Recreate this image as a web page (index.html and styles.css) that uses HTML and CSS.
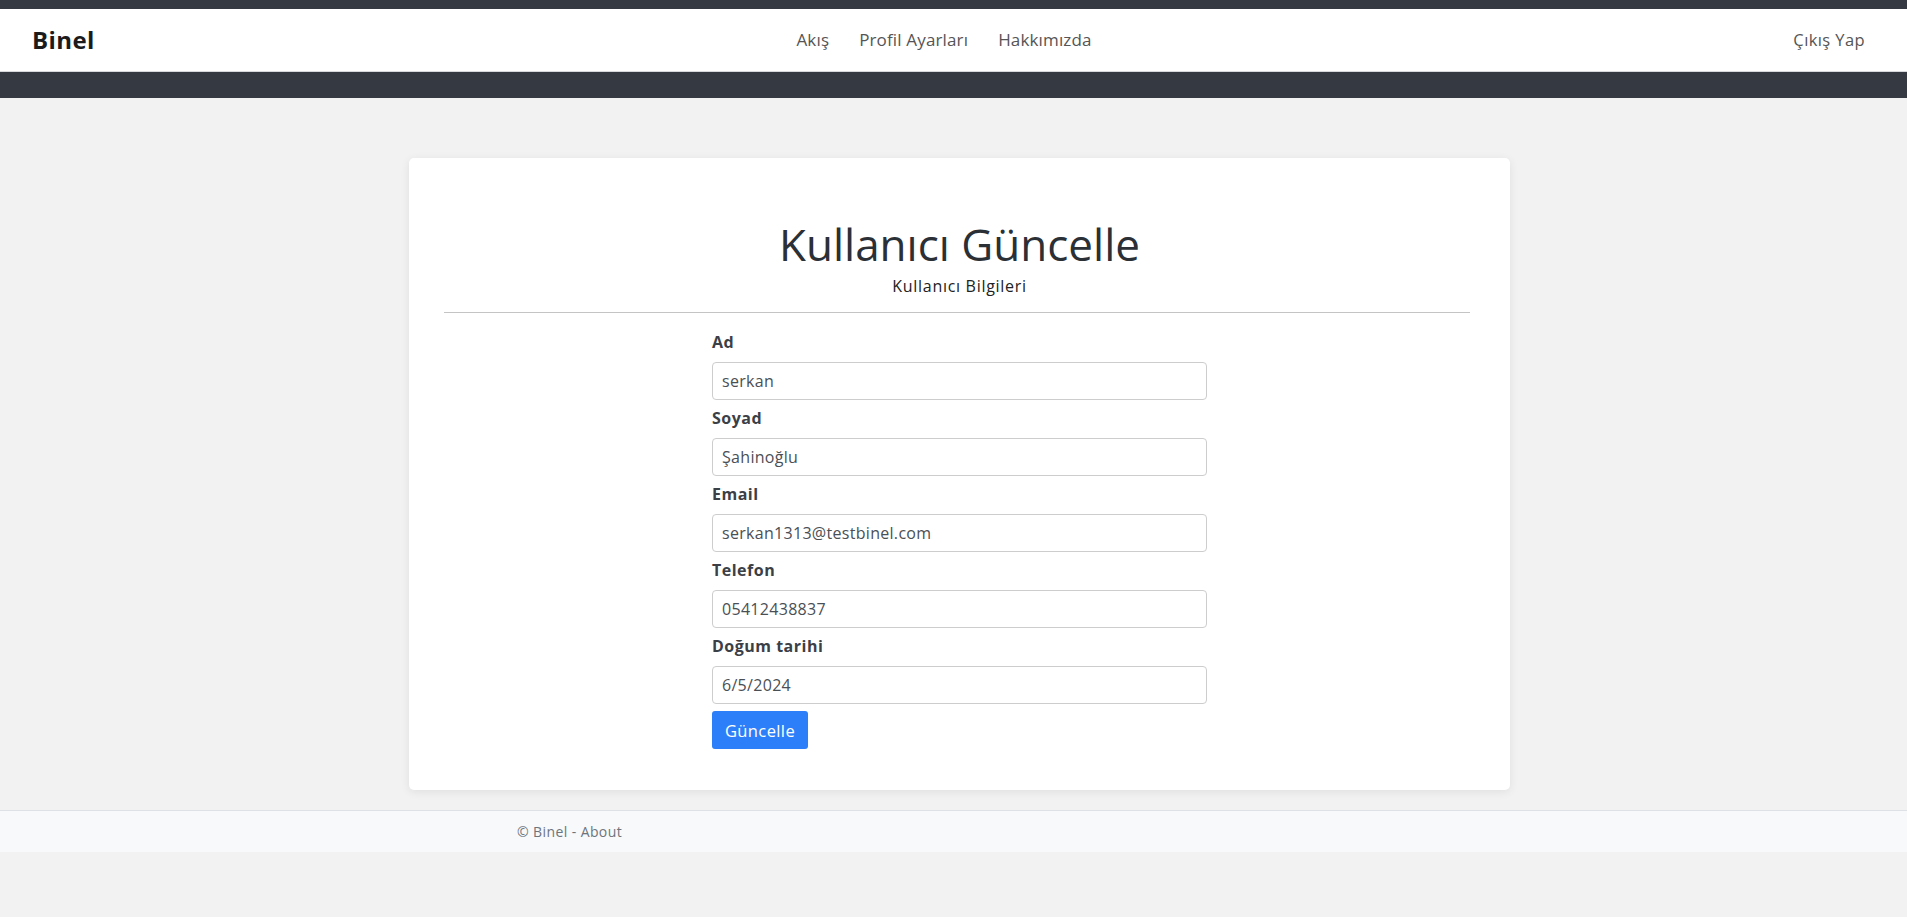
FILE: index.html
```html
<!DOCTYPE html>
<html lang="tr">
<head>
<meta charset="utf-8">
<title>Binel - Kullanıcı Güncelle</title>
<link rel="stylesheet" href="styles.css">
</head>
<body>
<div class="topstrip"></div>
<nav class="navbar">
  <a class="brand" href="#">Binel</a>
  <ul class="nav-links">
    <li><a href="#">Akış</a></li>
    <li><a href="#">Profil Ayarları</a></li>
    <li><a href="#">Hakkımızda</a></li>
  </ul>
  <a class="logout" href="#">Çıkış Yap</a>
</nav>
<div class="darkband"></div>
<main class="main">
  <section class="card">
    <h1 class="title">Kullanıcı Güncelle</h1>
    <p class="subtitle">Kullanıcı Bilgileri</p>
    <hr class="divider">
    <form class="form">
      <div class="group">
        <label class="label">Ad</label>
        <input class="input" type="text" value="serkan">
      </div>
      <div class="group">
        <label class="label">Soyad</label>
        <input class="input" type="text" value="Şahinoğlu">
      </div>
      <div class="group">
        <label class="label">Email</label>
        <input class="input" type="text" value="serkan1313@testbinel.com">
      </div>
      <div class="group">
        <label class="label">Telefon</label>
        <input class="input" type="text" value="05412438837">
      </div>
      <div class="group">
        <label class="label">Doğum tarihi</label>
        <input class="input" type="text" value="6/5/2024">
      </div>
      <button class="btn" type="button">Güncelle</button>
    </form>
  </section>
</main>
<footer class="footer">
  <span class="footer-text">© Binel - <a href="#">About</a></span>
</footer>
</body>
</html>
```
FILE: styles.css
```css
* { box-sizing: border-box; }
html, body { margin: 0; padding: 0; }
body {
  background: #f2f2f2;
  font-family: "Open Sans", "Noto Sans", sans-serif;
  color: #212529;
}
a { text-decoration: none; color: inherit; }
.topstrip { height: 9px; background: #353a42; }
.navbar {
  height: 63px;
  background: #fff;
  border-bottom: 1px solid #d6d8db;
  display: flex;
  align-items: center;
  padding: 0 32px 2px;
}
.brand { font-size: 24px; font-weight: 700; color: #1b1b1b; letter-spacing: 0.4px; }
.nav-links {
  list-style: none;
  margin: 0 auto;
  padding: 0;
  display: flex;
}
.nav-links a { display: block; padding: 0 15px; font-size: 17px; color: #555; letter-spacing: 0.15px; }
.logout { font-size: 16.5px; color: #555; padding-right: 10px; letter-spacing: 0.4px; }
.darkband { height: 26px; background: #353a42; }
.main {
  display: flex;
  justify-content: center;
  padding: 60px 0 20px 12px;
}
.card {
  width: 1101px;
  background: #fff;
  border-radius: 5px;
  box-shadow: 0 2px 10px rgba(0,0,0,0.08);
  padding: 60px 35px 41px 35px;
}
.title {
  margin: 0;
  text-align: center;
  font-size: 44px;
  font-weight: 400;
  line-height: 52px;
  color: #2b3036;
}
.subtitle {
  margin: 4px 0 0;
  text-align: center;
  font-size: 16px;
  line-height: 24px;
  letter-spacing: 0.7px;
  color: #222;
}
.divider {
  margin: 14px 5px 17px 0;
  border: 0;
  border-top: 1.5px solid #c4c4c4;
}
.form {
  width: 495px;
  margin: 0 auto;
  display: flex;
  flex-direction: column;
  align-items: flex-start;
}
.group { width: 100%; margin-bottom: 6px; }
.label {
  display: block;
  font-size: 16px;
  font-weight: 700;
  line-height: 24px;
  letter-spacing: 0.5px;
  margin-bottom: 8px;
  color: #3b4047;
}
.input {
  display: block;
  width: 100%;
  height: 38px;
  border: 1px solid #cdcdcd;
  border-radius: 4px;
  padding: 0 9px;
  font-family: inherit;
  font-size: 16px;
  letter-spacing: 0.3px;
  color: #4a4f55;
  background: #fff;
}
.btn {
  margin-top: 1px;
  width: 96px;
  height: 38px;
  border: 0;
  border-radius: 3px;
  background: #2d7ff9;
  color: #fff;
  font-family: inherit;
  font-size: 16.5px;
  letter-spacing: 0.4px;
}
.footer {
  border-top: 1px solid #dee2e6;
  background: #f8f9fa;
  height: 42px;
  display: flex;
  align-items: center;
  padding-left: 517px;
}
.footer-text { font-size: 14px; letter-spacing: 0.4px; color: #6c757d; }
```
